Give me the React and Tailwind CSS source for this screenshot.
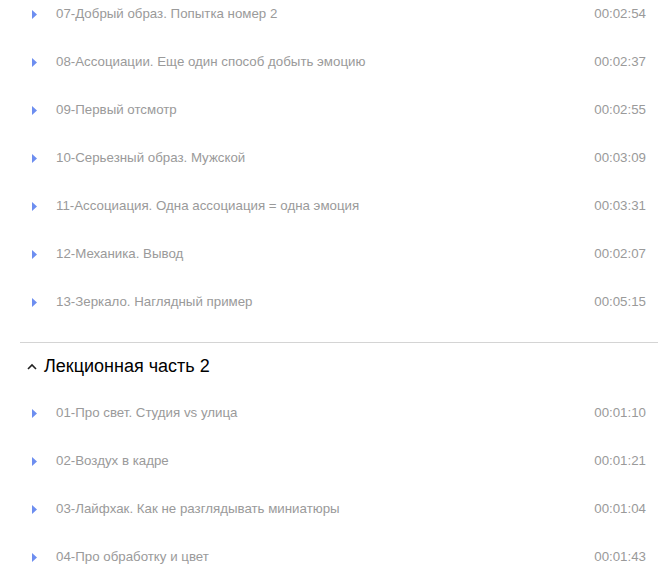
import React from "react";

const part1 = [
  ["07-Добрый образ. Попытка номер 2", "00:02:54"],
  ["08-Ассоциации. Еще один способ добыть эмоцию", "00:02:37"],
  ["09-Первый отсмотр", "00:02:55"],
  ["10-Серьезный образ. Мужской", "00:03:09"],
  ["11-Ассоциация. Одна ассоциация = одна эмоция", "00:03:31"],
  ["12-Механика. Вывод", "00:02:07"],
  ["13-Зеркало. Наглядный пример", "00:05:15"],
];

const part2 = [
  ["01-Про свет. Студия vs улица", "00:01:10"],
  ["02-Воздух в кадре", "00:01:21"],
  ["03-Лайфхак. Как не разглядывать миниатюры", "00:01:04"],
  ["04-Про обработку и цвет", "00:01:43"],
];

function Row({ title, time }) {
  return (
    <div className="h-12 flex items-center pl-3 pr-3">
      <svg width="5" height="9" viewBox="0 0 5 9" className="shrink-0">
        <path d="M0 0 L5 4.5 L0 9 Z" fill="#6d8ef0" />
      </svg>
      <div className="ml-[19px] flex-1 text-[13.3px] text-[#9a9a9a]">{title}</div>
      <div className="text-[13.3px] text-[#9a9a9a]">{time}</div>
    </div>
  );
}

export default function App() {
  return (
    <div
      className="w-[670px] h-[583px] overflow-hidden bg-white"
      style={{ fontFamily: '"Liberation Sans", Arial, sans-serif' }}
    >
      <div className="ml-5 mr-3 -mt-[10px]">
        {part1.map(([t, d]) => (
          <Row key={t} title={t} time={d} />
        ))}
        <div className="mt-4 border-t border-[#d4d4d4]" />
        <div className="h-[46px] flex items-center pl-[7px]">
          <svg width="10" height="7" viewBox="0 0 10 7" className="shrink-0">
            <path d="M1 6 L5 2 L9 6" fill="none" stroke="#222" strokeWidth="1.6" />
          </svg>
          <span className="ml-[7px] text-[18px] text-black">Лекционная часть 2</span>
        </div>
        {part2.map(([t, d]) => (
          <Row key={t} title={t} time={d} />
        ))}
      </div>
    </div>
  );
}
